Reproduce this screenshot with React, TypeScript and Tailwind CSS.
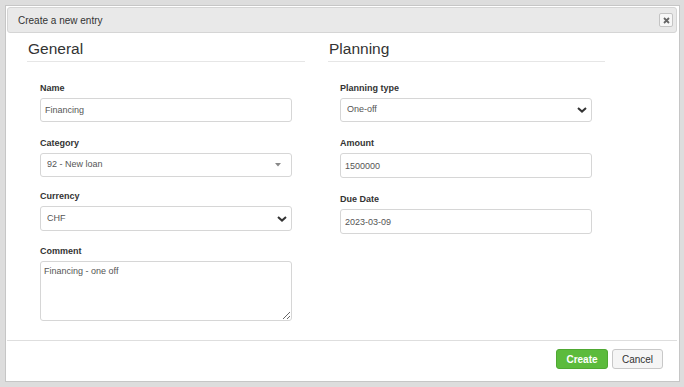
import { ReactNode } from 'react'

const font = { fontFamily: '"Liberation Sans", Arial, sans-serif' }

function Label({ children }: { children: ReactNode }) {
  return <div className="text-[9px] font-bold leading-[12px] text-[#333] mb-[4px]">{children}</div>
}

function TextInput({ value, h = 'h-[24px]' }: { value: string; h?: string }) {
  return (
    <input
      defaultValue={value}
      className={`block w-[252px] ${h} border border-[#d6d6d6] rounded-[3px] px-[4px] text-[9px] text-[#555] outline-none bg-white`}
      style={font}
    />
  )
}

function Chevron() {
  return (
    <svg width="10" height="6" viewBox="0 0 10 6" className="absolute right-[5px] top-1/2 -translate-y-1/2 pointer-events-none">
      <path d="M1 1 L5 4.6 L9 1" fill="none" stroke="#333" strokeWidth="2" />
    </svg>
  )
}

function Caret() {
  return (
    <svg width="6" height="4" viewBox="0 0 6 4" className="absolute right-[11px] top-1/2 -translate-y-1/2 pointer-events-none">
      <path d="M0 0 H6 L3 3.5 Z" fill="#888" />
    </svg>
  )
}

function SelectBox({ value, kind, h = 'h-[24px]' }: { value: string; kind: 'chevron' | 'caret'; h?: string }) {
  return (
    <div className={`relative w-[252px] ${h}`}>
      <select
        defaultValue={value}
        className="block w-full h-full appearance-none border border-[#d6d6d6] rounded-[3px] pl-[6px] text-[9px] text-[#555] outline-none bg-white"
        style={font}
      >
        <option>{value}</option>
      </select>
      {kind === 'chevron' ? <Chevron /> : <Caret />}
    </div>
  )
}

function SectionTitle({ children }: { children: ReactNode }) {
  return (
    <div className="text-[15.5px] leading-[18px] text-[#333] pb-[3px] pl-[1px] border-b border-[#e6e6e6]">
      {children}
    </div>
  )
}

export default function App() {
  return (
    <div className="w-[684px] h-[387px] bg-[#dddddd] pt-[5px] pl-[5px] overflow-hidden" style={font}>
      <div className="w-[675px] h-[377px] bg-white border border-[#c6c6c6] flex flex-col">
        <div className="ml-[1px] mr-[2px] mt-[1px] h-[26px] bg-[#e9e9e9] border border-[#d5d5d5] rounded-[3px] flex items-center justify-between pl-[10px] pr-[3px]">
          <span className="text-[10px] text-[#333]">Create a new entry</span>
          <button className="w-[14px] h-[14px] border border-[#c4c4c4] rounded-[2px] bg-[#f7f7f7] flex items-center justify-center">
            <svg width="7" height="7" viewBox="0 0 7 7">
              <path d="M1 1 L6 6 M6 1 L1 6" stroke="#666" strokeWidth="1.8" />
            </svg>
          </button>
        </div>

        <div className="flex gap-[23px] pl-[21px] pt-[7px]">
          <div className="w-[278px]">
            <SectionTitle>General</SectionTitle>
            <div className="pl-[13px] pt-[20px]">
              <Label>Name</Label>
              <TextInput value="Financing" />
              <div className="mt-[15px]">
                <Label>Category</Label>
                <SelectBox value="92 - New loan" kind="caret" />
              </div>
              <div className="mt-[13px]">
                <Label>Currency</Label>
                <SelectBox value="CHF" kind="chevron" h="h-[25px]" />
              </div>
              <div className="mt-[14px]">
                <Label>Comment</Label>
                <textarea
                  defaultValue="Financing - one off"
                  className="block w-[252px] h-[60px] border border-[#d6d6d6] rounded-[3px] px-[3px] py-[3px] text-[9px] leading-[12px] text-[#555] outline-none"
                  style={font}
                />
              </div>
            </div>
          </div>

          <div className="w-[277px]">
            <SectionTitle>Planning</SectionTitle>
            <div className="pl-[12px] pt-[20px]">
              <Label>Planning type</Label>
              <SelectBox value="One-off" kind="chevron" />
              <div className="mt-[15px]">
                <Label>Amount</Label>
                <TextInput value="1500000" h="h-[25px]" />
              </div>
              <div className="mt-[15px]">
                <Label>Due Date</Label>
                <TextInput value="2023-03-09" h="h-[25px]" />
              </div>
            </div>
          </div>
        </div>

        <div className="mt-auto ml-[1px] mr-[2px] border-t border-[#dedede] pt-[8px] pb-[12px] pr-[14px] flex justify-end gap-[4px]">
          <button className="w-[52px] h-[20px] rounded-[3px] bg-[#5cbb3c] border border-[#4fa832] text-white text-[10px] font-bold">
            Create
          </button>
          <button className="w-[51px] h-[20px] rounded-[3px] bg-[#f5f5f5] border border-[#c8c8c8] text-[#333] text-[10px]">
            Cancel
          </button>
        </div>
      </div>
    </div>
  )
}
